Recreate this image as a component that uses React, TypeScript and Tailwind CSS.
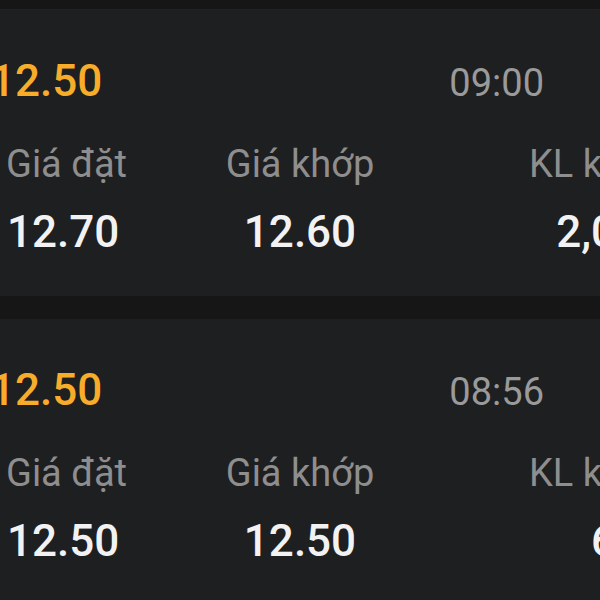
import React from 'react';

interface Order {
    id: number;
    price: string;
    time: string;
    orderPrice: string;
    matchPrice: string;
    volume: string;
}

const orders: Order[] = [
    { id: 1, price: '12.50', time: '09:00', orderPrice: '12.70', matchPrice: '12.60', volume: '2,000' },
    { id: 2, price: '12.50', time: '08:56', orderPrice: '12.50', matchPrice: '12.50', volume: '600' },
];

const OrderCard: React.FC<{ order: Order }> = ({ order }) => (
    <div className="bg-[#1e1f21] pt-[49px] pb-[42px]">
        <div className="flex items-baseline justify-between pr-[56px]">
            <span className="ml-[-10px] text-[44px] leading-[44px] font-medium text-[#f7ad2a]">{order.price}</span>
            <span className="text-[38px] leading-[38px] text-[#9a9a9a]">{order.time}</span>
        </div>
        <div className="mt-[42px] grid grid-cols-[200px_200px_266px] w-[666px]">
            <span className="pl-[6px] text-[38px] leading-[38px] text-[#8e8e8e]">Giá đặt</span>
            <span className="text-center text-[38px] leading-[38px] text-[#8e8e8e]">Giá khớp</span>
            <span className="text-right text-[38px] leading-[38px] text-[#8e8e8e]">KL khớp</span>
        </div>
        <div className="mt-[27px] grid grid-cols-[200px_200px_266px] w-[666px]">
            <span className="pl-[7px] text-[44px] leading-[44px] font-medium text-[#f2f2f2]">{order.orderPrice}</span>
            <span className="text-center text-[44px] leading-[44px] font-medium text-[#f2f2f2]">{order.matchPrice}</span>
            <span className="text-right text-[44px] leading-[44px] font-medium text-[#f2f2f2]">{order.volume}</span>
        </div>
    </div>
);

const App: React.FC = () => {
    return (
        <div className="w-[600px] h-[600px] overflow-hidden bg-[#161616] font-['Roboto',sans-serif]">
            <div className="h-[9px]" />
            <div className="flex flex-col gap-[23px] border-t border-[#1d2327]">
                {orders.map((order) => (
                    <OrderCard key={order.id} order={order} />
                ))}
            </div>
        </div>
    );
};

export default App;
